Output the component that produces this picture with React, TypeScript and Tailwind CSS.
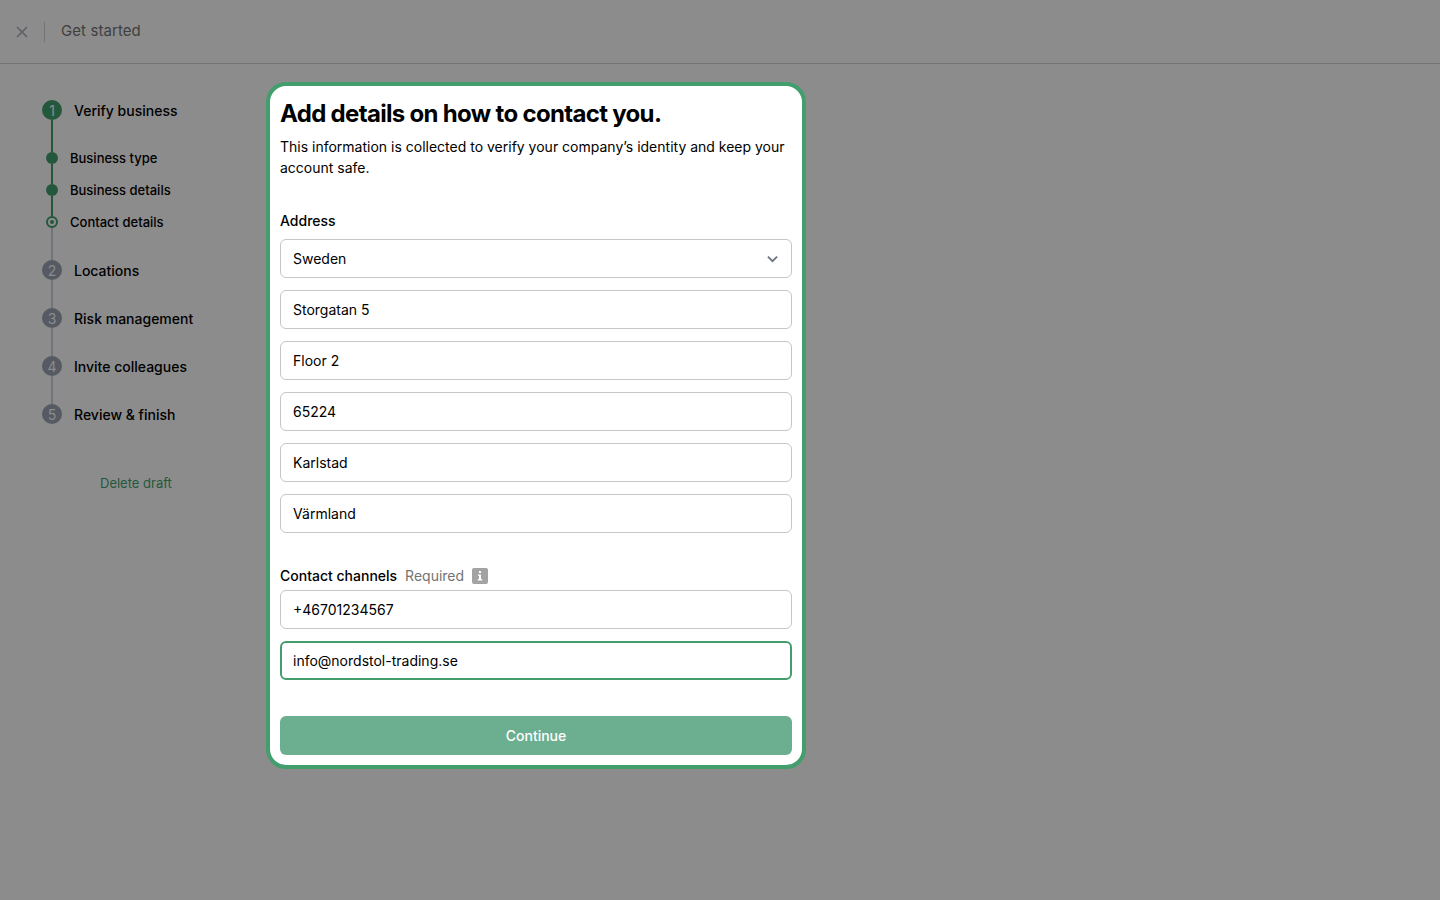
import React from "react";

type Step = {
  label: string;
  kind: "number" | "dot" | "current";
  num?: number;
  done?: boolean;
  row: string;
  line?: string;
};

const steps: Step[] = [
  { label: "Verify business", kind: "number", num: 1, done: true, row: "h-[52px]", line: "bg-[#24583d]" },
  { label: "Business type", kind: "dot", row: "h-8", line: "bg-[#24583d]" },
  { label: "Business details", kind: "dot", row: "h-8", line: "bg-[#24583d]" },
  { label: "Contact details", kind: "current", row: "h-11", line: "bg-[#72737b]" },
  { label: "Locations", kind: "number", num: 2, row: "h-12", line: "bg-[#72737b]" },
  { label: "Risk management", kind: "number", num: 3, row: "h-12", line: "bg-[#72737b]" },
  { label: "Invite colleagues", kind: "number", num: 4, row: "h-12", line: "bg-[#72737b]" },
  { label: "Review & finish", kind: "number", num: 5, row: "h-5" },
];

function Marker({ step }: { step: Step }) {
  if (step.kind === "number") {
    return (
      <span
        className={
          step.done
            ? "flex size-5 shrink-0 items-center justify-center rounded-full bg-[#24583d] pt-0.5 text-sm leading-none text-[#8c8c8c]"
            : "flex size-5 shrink-0 items-center justify-center rounded-full bg-[#555a63] pt-0.5 text-sm leading-none text-[#8c8c8c]"
        }
      >
        {step.num}
      </span>
    );
  }
  if (step.kind === "dot") {
    return <span className="size-3 shrink-0 rounded-full bg-[#24583d]" />;
  }
  return (
    <span className="flex size-3 shrink-0 items-center justify-center rounded-full border-2 border-[#24583d]">
      <span className="size-1 rounded-full bg-[#24583d]" />
    </span>
  );
}

function StepRow({ step }: { step: Step }) {
  return (
    <li className={`flex ${step.row}`}>
      <div className="flex w-5 flex-col items-center">
        <Marker step={step} />
        {step.line && <span className={`w-0.5 flex-1 ${step.line}`} />}
      </div>
      {step.kind === "number" ? (
        <span className="ml-3 mt-px h-5 text-sm leading-5 font-medium whitespace-nowrap">{step.label}</span>
      ) : (
        <span className="ml-2 -mt-1 h-5 text-[13px] leading-5 font-medium whitespace-nowrap">{step.label}</span>
      )}
    </li>
  );
}

function Field({ value, select, focused }: { value: string; select?: boolean; focused?: boolean }) {
  return (
    <div
      className={
        focused
          ? "flex h-[39px] items-center justify-between rounded-md border-2 border-[#439e6e] px-[11px] text-sm"
          : "flex h-[39px] items-center justify-between rounded-md border border-[#c6c6c6] px-3 text-sm"
      }
    >
      <span className="pt-px">{value}</span>
      {select && (
        <svg className="size-3" viewBox="0 0 12 12" fill="none" stroke="#6b7280" strokeWidth="1.8">
          <path d="M.9 3.6l4.6 4.6 4.6-4.6" />
        </svg>
      )}
    </div>
  );
}

export default function App() {
  return (
    <div className="flex h-[900px] w-[1440px] flex-col overflow-hidden bg-[#8c8c8c] font-['Inter',sans-serif] text-black">
      <header className="flex h-16 shrink-0 items-center border-b border-[#727375] pl-4">
        <svg className="size-3" viewBox="0 0 12 12" fill="none" stroke="#555a63" strokeWidth="1.25">
          <path d="m1 1 10 10M11 1 1 11" />
        </svg>
        <span className="ml-4 h-5 w-px bg-[#727375]" />
        <span className="ml-4 -mt-0.5 text-[15px] leading-5 tracking-[0.08px] text-[#3f3f3f]">Get started</span>
      </header>
      <div className="flex flex-1">
        <aside className="w-[266px] shrink-0 pt-9 pl-[42px]">
          <ol>
            {steps.map((s) => (
              <StepRow key={s.label} step={s} />
            ))}
          </ol>
          <button className="mt-[49px] ml-[58px] block h-5 text-[13px] leading-5 text-[#24583d]">Delete draft</button>
        </aside>
        <main className="mt-[18px] h-[687px] w-[540px] rounded-[20px] border-4 border-[#439e6e] bg-white p-2.5">
          <h1 className="mt-0.5 text-2xl leading-8 font-bold tracking-[-0.68px] whitespace-nowrap">
            Add details on how to contact you.
          </h1>
          <p className="mt-1.5 text-sm leading-[21px]">
            This information is collected to verify your company’s identity and keep your account safe.
          </p>
          <h2 className="mt-[33px] text-sm leading-5 font-medium">Address</h2>
          <div className="mt-2 flex flex-col gap-3">
            <Field value="Sweden" select />
            <Field value="Storgatan 5" />
            <Field value="Floor 2" />
            <Field value="65224" />
            <Field value="Karlstad" />
            <Field value="Värmland" />
          </div>
          <div className="mt-[33px] flex h-5 items-center text-sm leading-5">
            <span className="font-medium">Contact channels</span>
            <span className="ml-2 text-[#737373]">Required</span>
            <svg className="ml-2 size-4" viewBox="0 0 16 16">
              <rect width="16" height="16" rx="2" fill="#a3a3a3" />
              <path d="M7 3h2v2H7zM6 6.5h3V11h1.2v1.4H5.8V11H7V7.8H6z" fill="#fff" />
            </svg>
          </div>
          <div className="mt-1 flex flex-col gap-3">
            <Field value="+46701234567" />
            <Field value="info@nordstol-trading.se" focused />
          </div>
          <button className="mt-9 block h-[39px] w-full rounded-md bg-[#6caf90] text-sm font-medium text-white">
            Continue
          </button>
        </main>
      </div>
    </div>
  );
}
